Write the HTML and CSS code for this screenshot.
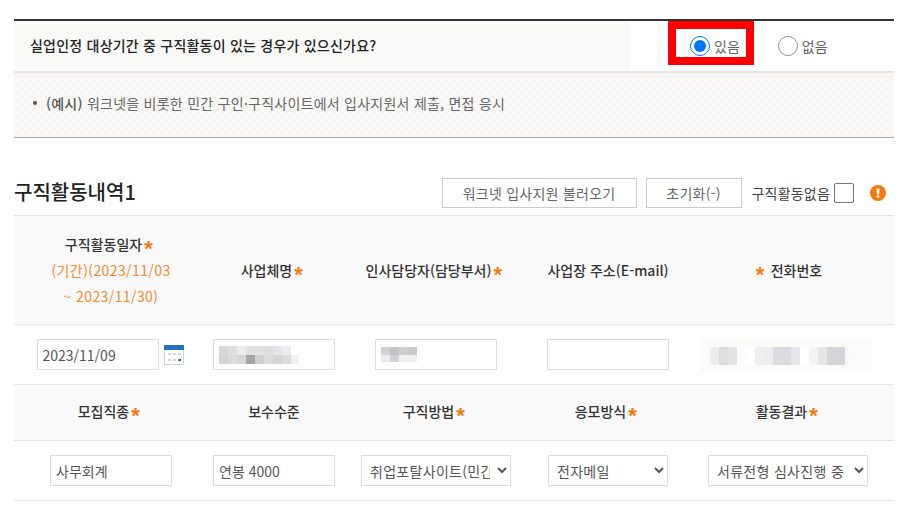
FILE: index.html
```html
<!DOCTYPE html>
<html lang="ko">
<head>
  <meta charset="utf-8">
  <title>구직활동내역</title>
  <link rel="stylesheet" href="styles.css">
</head>
<body>
  <div class="page">
    <div class="question">
      <div class="question-text">실업인정 대상기간 중 구직활동이 있는 경우가 있으신가요?</div>
      <div class="question-options">
        <label class="radio-item"><input type="radio" name="has" checked><span>있음</span></label>
        <label class="radio-item"><input type="radio" name="has"><span>없음</span></label>
      </div>
      <div class="highlight"></div>
    </div>
    <div class="notice">
      <span class="bullet"></span><b>(예시)</b>&nbsp;워크넷을 비롯한 민간 구인·구직사이트에서 입사지원서 제출, 면접 응시
    </div>

    <div class="section-head">
      <h2>구직활동내역1</h2>
      <div class="section-tools">
        <button class="btn btn-wide">워크넷 입사지원 불러오기</button>
        <button class="btn btn-reset">초기화(-)</button>
        <label class="none-check"><span>구직활동없음</span><input type="checkbox"></label>
        <svg class="info" width="16" height="16" viewBox="0 0 16 16">
          <circle cx="8" cy="8" r="8" fill="#f47b0f"/>
          <path d="M6.4 3.4h3.2L9 9.4H7z" fill="#fff"/>
          <circle cx="8" cy="11.6" r="1.4" fill="#fff"/>
        </svg>
      </div>
    </div>

    <div class="table">
      <div class="cell head head-tall">
        <div>구직활동일자<i>*</i></div>
        <div class="period">(기간)(2023/11/03</div>
        <div class="period">~ 2023/11/30)</div>
      </div>
      <div class="cell head head-tall"><div>사업체명<i>*</i></div></div>
      <div class="cell head head-tall"><div>인사담당자(담당부서)<i>*</i></div></div>
      <div class="cell head head-tall"><div>사업장 주소(E-mail)</div></div>
      <div class="cell head head-tall"><div><i class="lead">*</i>전화번호</div></div>

      <div class="cell body body-tall date-cell">
        <input class="field" type="text" value="2023/11/09">
        <svg class="calendar" width="20" height="20" viewBox="0 0 20 20">
          <rect x="0.5" y="0.5" width="19" height="19" fill="#fff" stroke="#cfd3d8"/>
          <rect width="20" height="5" fill="#2272bd"/>
          <g fill="#d5d7da">
            <rect x="4" y="8" width="3" height="2"/><rect x="9" y="8" width="3" height="2"/><rect x="14" y="8" width="3" height="2"/>
            <rect x="4" y="14" width="3" height="2"/><rect x="9" y="14" width="3" height="2"/>
          </g>
          <rect x="14" y="14" width="3" height="2" fill="#2272bd"/>
        </svg>
      </div>
      <div class="cell body body-tall">
        <div class="field masked">
          <svg width="80" height="18" viewBox="0 0 80 18" shape-rendering="crispEdges">
            <rect width="9" height="9" fill="#d8d8d8"/><rect x="9" width="9" height="9" fill="#e0e0e0"/><rect x="18" width="9" height="9" fill="#ececec"/><rect x="27" width="18" height="9" fill="#e2e2e2"/><rect x="54" width="9" height="9" fill="#e4e4e8"/><rect x="63" width="9" height="9" fill="#ededed"/><rect x="45" width="9" height="9" fill="#dedede"/>
            <rect y="9" width="9" height="9" fill="#d4d4d4"/><rect x="9" y="9" width="9" height="9" fill="#dcdcdc"/><rect x="18" y="9" width="9" height="9" fill="#d6d6d6"/><rect x="27" y="9" width="9" height="9" fill="#a4a4a4"/><rect x="36" y="9" width="9" height="9" fill="#cfcfcf"/><rect x="45" y="9" width="9" height="9" fill="#dcdce0"/><rect x="54" y="9" width="9" height="9" fill="#d4d4d4"/><rect x="63" y="9" width="9" height="9" fill="#dcdcdc"/><rect x="72" y="9" width="8" height="9" fill="#f0f1f3"/>
          </svg>
        </div>
      </div>
      <div class="cell body body-tall">
        <div class="field masked">
          <svg width="36" height="15" viewBox="0 0 36 15" shape-rendering="crispEdges">
            <rect width="9" height="8" fill="#d2d2d2"/><rect x="9" width="9" height="8" fill="#c4c4c6"/><rect x="18" width="9" height="8" fill="#cfcfcf"/><rect x="27" width="9" height="8" fill="#cacaca"/>
            <rect y="8" width="9" height="7" fill="#ececec"/><rect x="9" y="8" width="9" height="7" fill="#d4d0d8"/><rect x="18" y="8" width="18" height="7" fill="#eff1f0"/>
          </svg>
        </div>
      </div>
      <div class="cell body body-tall"><input class="field" type="text"></div>
      <div class="cell body body-tall phone-cell">
        <svg width="171" height="34" viewBox="0 0 171 34" shape-rendering="crispEdges">
          <rect width="171" height="34" fill="#fbfbfa"/>
          <rect x="9" y="9" width="9" height="18" fill="#ececec"/><rect x="18" y="9" width="9" height="18" fill="#dedee0"/><rect x="27" y="9" width="9" height="18" fill="#e6e4e2"/><rect x="36" y="9" width="9" height="18" fill="#fafcfe"/><rect x="45" y="9" width="9" height="18" fill="#fff"/>
          <rect x="54" y="9" width="9" height="18" fill="#f0f0f0"/><rect x="63" y="9" width="9" height="18" fill="#eeeeee"/><rect x="72" y="9" width="18" height="18" fill="#dcdce0"/><rect x="90" y="9" width="9" height="18" fill="#e8e8ea"/><rect x="99" y="9" width="9" height="18" fill="#fff"/>
          <rect x="108" y="9" width="9" height="18" fill="#f4f4f4"/><rect x="117" y="9" width="9" height="18" fill="#e4e6e4"/><rect x="126" y="9" width="18" height="18" fill="#d4d4d6"/><rect x="144" y="9" width="9" height="18" fill="#f8f9fc"/>
        </svg>
      </div>

      <div class="cell head head-short"><div>모집직종<i>*</i></div></div>
      <div class="cell head head-short"><div>보수수준</div></div>
      <div class="cell head head-short"><div>구직방법<i>*</i></div></div>
      <div class="cell head head-short"><div>응모방식<i>*</i></div></div>
      <div class="cell head head-short"><div>활동결과<i>*</i></div></div>

      <div class="cell body body-short"><input class="field" type="text" value="사무회계"></div>
      <div class="cell body body-short"><input class="field" type="text" value="연봉 4000"></div>
      <div class="cell body body-short">
        <select class="pick pick-method"><option>취업포탈사이트(민간)</option></select>
      </div>
      <div class="cell body body-short">
        <select class="pick pick-apply"><option>전자메일</option></select>
      </div>
      <div class="cell body body-short result-cell">
        <select class="pick pick-result"><option>서류전형 심사진행 중</option></select>
      </div>
    </div>
  </div>
</body>
</html>
```

FILE: styles.css
```css
* {
  box-sizing: border-box;
}
body {
  margin: 0;
  background: #fff;
  color: #333;
  font-family: "Noto Sans CJK KR", "Noto Sans", sans-serif;
  font-size: 14px;
}
.page {
  width: 880px;
  margin-left: 14px;
  padding-top: 19px;
}

/* question */
.question {
  position: relative;
  display: flex;
  height: 54px;
  border-top: 2px solid #333;
  border-bottom: 2px solid #e5e5e5;
}
.question-text {
  width: 616px;
  padding-left: 16px;
  line-height: 48px;
  background: #f9f9f7;
  color: #222;
  font-weight: 500;
  letter-spacing: 0.22px;
}
.question-options {
  display: flex;
  align-items: center;
  gap: 38px;
  padding: 0 0 0 60px;
}
.radio-item {
  display: flex;
  align-items: center;
  gap: 4px;
  color: #666;
}
.radio-item input {
  appearance: none;
  width: 20px;
  height: 20px;
  margin: 0;
  border: 1px solid #8d8d8d;
  border-radius: 50%;
  background: #fff;
}
.radio-item input:checked {
  border-color: #0075ff;
  padding: 3px;
  background: #0075ff content-box;
}
.highlight {
  position: absolute;
  left: 654px;
  top: 0;
  width: 86px;
  height: 44px;
  border: 8px solid #f00;
}
.notice {
  display: flex;
  align-items: center;
  height: 65px;
  padding: 0 0 5px 19px;
  border-bottom: 1px solid #aaa;
  background-color: #f9f8f6;
  background-image: radial-gradient(#f0efec 1px, transparent 1px), radial-gradient(#f0efec 1px, transparent 1px);
  background-position: 0 0, 4px 4px;
  background-size: 8px 8px;
  color: #666;
  font-size: 14px;
  letter-spacing: 0.25px;
}
.notice b {
  font-weight: 500;
  color: #555;
}
.bullet {
  width: 4px;
  height: 4px;
  margin-right: 9px;
  border-radius: 50%;
  background: #555;
}

/* section header */
.section-head {
  display: flex;
  justify-content: space-between;
  align-items: center;
  height: 77px;
  padding-top: 33px;
}
h2 {
  margin: -4px 0 0;
  font-size: 20px;
  font-weight: 500;
  color: #222;
}
.section-tools {
  display: flex;
  align-items: center;
  color: #444;
}
.btn {
  height: 30px;
  padding: 0;
  border: 1px solid #ccc;
  background: #fff;
  color: #666;
  font: inherit;
  letter-spacing: 0.25px;
}
.btn-wide {
  width: 195px;
}
.btn-reset {
  width: 96px;
  margin-left: 9px;
}
.none-check {
  display: flex;
  align-items: center;
  gap: 4px;
  margin-left: 10px;
  letter-spacing: 0.2px;
}
.none-check input {
  appearance: none;
  width: 20px;
  height: 20px;
  margin: 0;
  border: 1px solid #767676;
  border-radius: 2px;
  background: #fff;
}
.info {
  margin: 0 8px 0 16px;
}

/* table */
.table {
  display: grid;
  grid-template-columns: 194px 132px 192px 152px 210px;
  border-top: 1px solid #e5e5e5;
}
.cell {
  display: flex;
  align-items: center;
  justify-content: center;
  border-bottom: 1px solid #e5e5e5;
}
.head {
  background: #f9f9f9;
  color: #333;
  font-weight: 500;
  text-align: center;
}
.head i {
  display: inline-block;
  width: 8px;
  margin: 0 5px 0 2px;
  color: #f47b0f;
  font-family: "Liberation Sans", sans-serif;
  font-size: 22px;
  font-style: normal;
  font-weight: 700;
  line-height: 0;
  vertical-align: -6px;
}
.head i.lead {
  margin: 0 7px 0 0;
}
.head-tall {
  height: 109px;
  flex-direction: column;
  line-height: 26px;
}
.period {
  color: #f58a2e;
  font-weight: 400;
  letter-spacing: 0.4px;
}
.body-tall {
  height: 60px;
}
.head-short {
  height: 56px;
  padding-bottom: 3px;
}
.body-short {
  height: 60px;
}
.date-cell {
  padding-right: 2px;
}
.phone-cell {
  padding-right: 6px;
}
.result-cell {
  padding-right: 2px;
}
.field {
  display: flex;
  align-items: center;
  width: 122px;
  height: 31px;
  padding: 0 5px;
  border: 1px solid #ddd;
  border-radius: 0;
  background: #fff;
  color: #555;
  font: inherit;
}
.calendar {
  margin-left: 5px;
}
.pick {
  height: 31px;
  padding: 0 4px;
  border: 1px solid #ddd;
  border-radius: 0;
  background: #fff;
  color: #555;
  font: inherit;
  letter-spacing: 0.3px;
}
.pick-method {
  width: 150px;
}
.pick-apply {
  width: 120px;
}
.pick-result {
  width: 160px;
}
```
